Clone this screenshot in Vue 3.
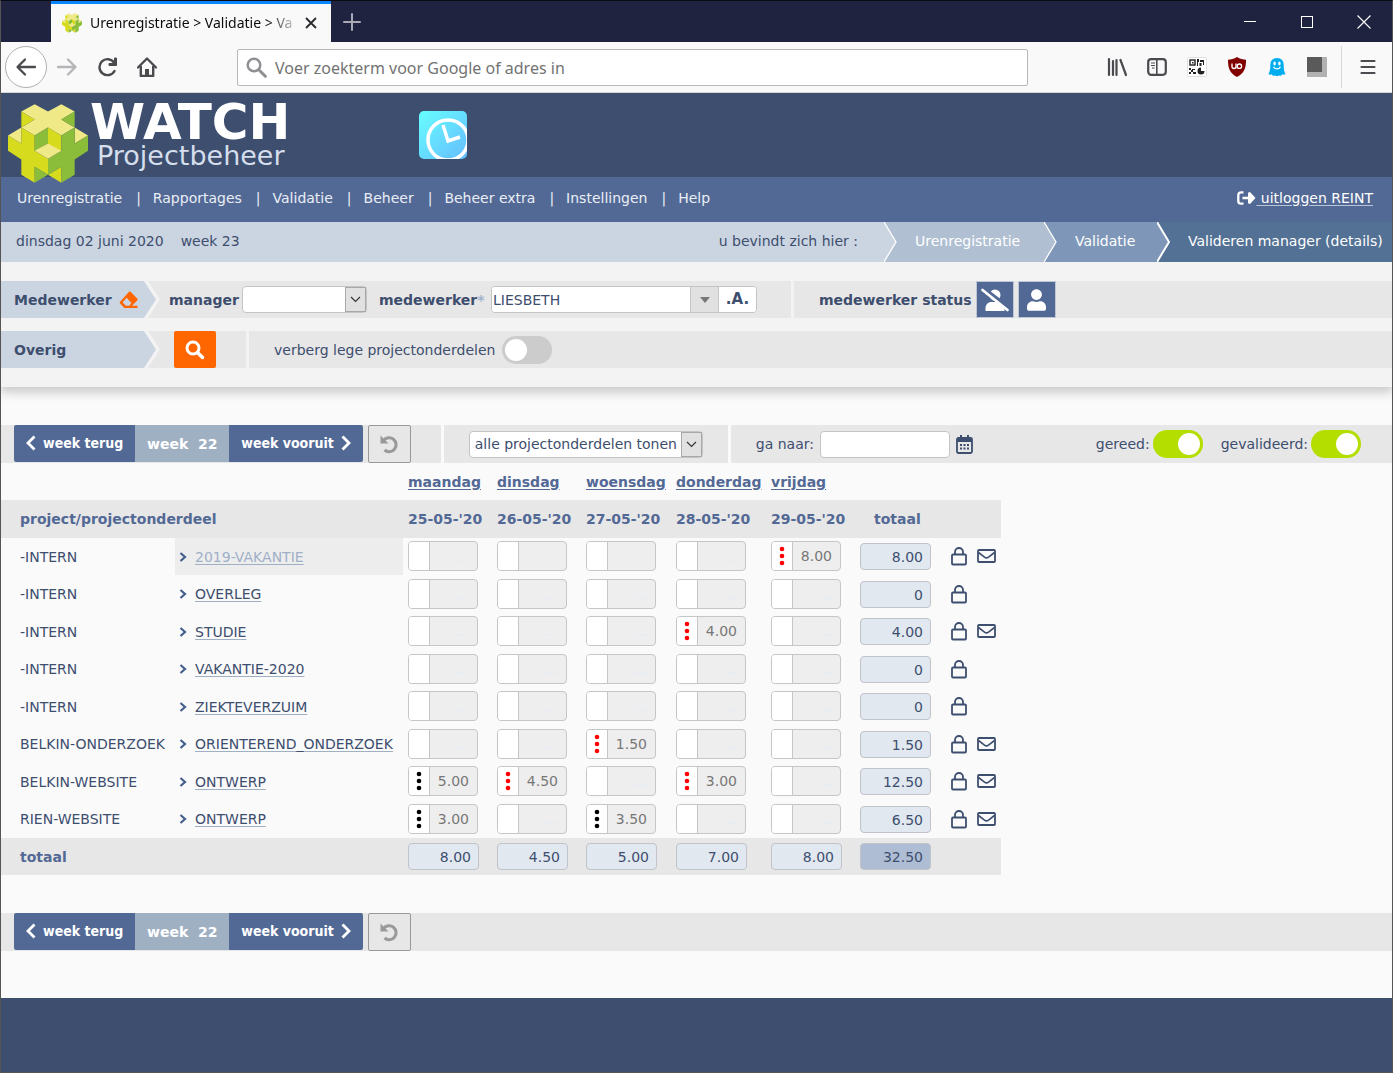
<script setup>
import { ref } from 'vue'

const menu = ['Urenregistratie', 'Rapportages', 'Validatie', 'Beheer', 'Beheer extra', 'Instellingen', 'Help']

const days = [
  { name: 'maandag', date: "25-05-'20", total: '8.00' },
  { name: 'dinsdag', date: "26-05-'20", total: '4.50' },
  { name: 'woensdag', date: "27-05-'20", total: '5.00' },
  { name: 'donderdag', date: "28-05-'20", total: '7.00' },
  { name: 'vrijdag', date: "29-05-'20", total: '8.00' },
]

const none = { value: '', mark: '' }
const red = (value) => ({ value, mark: 'red' })
const black = (value) => ({ value, mark: 'black' })

const rows = [
  { project: '-INTERN', part: '2019-VAKANTIE', cells: [none, none, none, none, red('8.00')], total: '8.00', mail: true, active: true },
  { project: '-INTERN', part: 'OVERLEG', cells: [none, none, none, none, none], total: '0' },
  { project: '-INTERN', part: 'STUDIE', cells: [none, none, none, red('4.00'), none], total: '4.00', mail: true },
  { project: '-INTERN', part: 'VAKANTIE-2020', cells: [none, none, none, none, none], total: '0' },
  { project: '-INTERN', part: 'ZIEKTEVERZUIM', cells: [none, none, none, none, none], total: '0' },
  { project: 'BELKIN-ONDERZOEK', part: 'ORIENTEREND_ONDERZOEK', cells: [none, none, red('1.50'), none, none], total: '1.50', mail: true },
  { project: 'BELKIN-WEBSITE', part: 'ONTWERP', cells: [black('5.00'), red('4.50'), none, red('3.00'), none], total: '12.50', mail: true },
  { project: 'RIEN-WEBSITE', part: 'ONTWERP', cells: [black('3.00'), none, black('3.50'), none, none], total: '6.50', mail: true },
]

const hideEmpty = ref(false)
const ready = ref(true)
const validated = ref(true)
const employee = ref('LIESBETH')
</script>

<template>
  <div class="window">
    <div class="titlebar">
      <div class="tab">
        <svg class="favicon" viewBox="0 0 240 236" aria-hidden="true">
          <use href="#cube" />
        </svg>
        <span class="tab-title">Urenregistratie &gt; Validatie &gt; Va</span>
        <button class="bare tab-close" aria-label="Tabblad sluiten">
          <svg width="12" height="12" viewBox="0 0 12 12"><path d="M1 1l10 10M11 1L1 11" stroke="#2a2a2e" stroke-width="1.8" /></svg>
        </button>
      </div>
      <button class="bare new-tab" aria-label="Nieuw tabblad">
        <svg width="18" height="18" viewBox="0 0 18 18"><path d="M9 1v16M1 9h16" stroke="#a9a9b8" stroke-width="2" stroke-linecap="round" /></svg>
      </button>
      <div class="window-buttons">
        <button class="bare" aria-label="Minimaliseren">
          <svg width="14" height="14" viewBox="0 0 14 14"><path d="M1 6.500h12" stroke="#fff" /></svg>
        </button>
        <button class="bare" aria-label="Maximaliseren">
          <svg width="14" height="14" viewBox="0 0 14 14"><rect x="1.500" y="1.500" width="11" height="11" fill="none" stroke="#fff" /></svg>
        </button>
        <button class="bare" aria-label="Sluiten">
          <svg width="14" height="14" viewBox="0 0 14 14"><path d="M.5.5l13 13M13.500.5l-13 13" stroke="#fff" stroke-width="1.100" /></svg>
        </button>
      </div>
    </div>

    <div class="toolbar">
      <button class="bare back" aria-label="Terug">
        <svg width="22" height="20" viewBox="0 0 22 20"><path d="M20 10H3M10 2.500L2.500 10l7.500 7.500" fill="none" stroke="#4a4a4f" stroke-width="2.300" stroke-linecap="round" stroke-linejoin="round" /></svg>
      </button>
      <button class="bare tool" aria-label="Vooruit">
        <svg width="22" height="20" viewBox="0 0 22 20"><path d="M2 10h17M12 2.500l7.500 7.500-7.500 7.500" fill="none" stroke="#b5b5b7" stroke-width="2.300" stroke-linecap="round" stroke-linejoin="round" /></svg>
      </button>
      <button class="bare tool" aria-label="Vernieuwen">
        <svg width="20" height="20" viewBox="0 0 20 20"><path d="M17.500 14A8 8 0 1 1 17 5.500" fill="none" stroke="#4a4a4f" stroke-width="2.400" stroke-linecap="round" /><path d="M19.500 1v7.500H12V6.500h5.500V1z" fill="#4a4a4f" stroke="#4a4a4f" stroke-linejoin="round" /></svg>
      </button>
      <button class="bare tool" aria-label="Startpagina">
        <svg width="20" height="20" viewBox="0 0 20 20"><path d="M1 10.500L10 1.500l9 9" fill="none" stroke="#4a4a4f" stroke-width="2.300" stroke-linecap="round" stroke-linejoin="round" /><path d="M3.800 9v10h12.400V9" fill="none" stroke="#4a4a4f" stroke-width="2.400" stroke-linejoin="round" /><path d="M8 19v-7h4v7z" fill="#4a4a4f" /></svg>
      </button>
      <div class="urlbar">
        <svg width="21" height="21" viewBox="0 0 21 21" aria-hidden="true"><circle cx="8" cy="8" r="6.300" fill="none" stroke="#8f8f94" stroke-width="2.500" /><path d="M12.800 12.800l6.500 6.500" stroke="#8f8f94" stroke-width="3" stroke-linecap="round" /></svg>
        <input type="text" aria-label="Adresbalk" placeholder="Voer zoekterm voor Google of adres in" />
      </div>
      <div class="extensions">
        <button class="bare" aria-label="Bibliotheek">
          <svg width="20" height="20" viewBox="0 0 20 20"><path d="M2 2v16M6 4v14M9.500 3v15M13.500 3l5.500 15" stroke="#4a4a4f" stroke-width="2.200" stroke-linecap="round" /></svg>
        </button>
        <button class="bare" aria-label="Zijbalk">
          <svg width="20" height="20" viewBox="0 0 20 20"><rect x="1.200" y="2.200" width="17.600" height="15.600" rx="3" fill="none" stroke="#4a4a4f" stroke-width="2.200" /><path d="M9.800 3v14" stroke="#4a4a4f" stroke-width="1.600" /><path d="M4 6h4M4 8.500h4M5 11h2.500" stroke="#4a4a4f" stroke-width="1.200" /></svg>
        </button>
        <button class="bare" aria-label="QR-code">
          <svg width="20" height="20" viewBox="0 0 20 20"><rect x=".5" y=".5" width="19" height="19" rx="1" fill="#fff" stroke="#e0e0e0" /><rect x="3" y="3" width="5" height="5" fill="none" stroke="#222" stroke-width="1.400" /><path d="M5 5h1.500v1.500H5zM10 2h2v3h-1v4h-1zM13 3h4v5h-1V5h-3zM12.500 6h2v3h-2zM2 11h2v2H2zM5 12h3v1H6v2H4v2H2v-2h2v-2h1zM6 15h3v2H6z" fill="#222" /><path d="M14 10.500v3.500h3.500a3.500 3.500 0 1 1-3.500-3.500z" fill="#222" /></svg>
        </button>
        <button class="bare" aria-label="Advertentieblokkering">
          <svg width="20" height="20" viewBox="0 0 20 20"><path d="M10 0c3 2 6 2.600 9 2.700C19 11 17.500 16 10 20 2.500 16 1 11 1 2.700 4 2.600 7 2 10 0z" fill="#800000" /><path d="M5 6.500v3a2 2 0 0 0 4 0v-3M9 9v2.500" fill="none" stroke="#fff" stroke-width="1.300" /><circle cx="12.400" cy="9.200" r="2.200" fill="none" stroke="#fff" stroke-width="1.300" /></svg>
        </button>
        <button class="bare" aria-label="Trackerblokkering">
          <svg width="20" height="20" viewBox="0 0 20 20"><path d="M10 1c4.500 0 6.700 3 6.700 7 0 4 .3 6.500 1.800 9-1.200.9-2.300.9-3.200.3-.9 1.600-2.300 1.900-3.300.9-1 1.200-3 1.200-4 0-1 1-2.400.7-3.300-.9-.9.6-2 .6-3.200-.3C3 14.500 3.300 12 3.300 8c0-4 2.200-7 6.700-7z" fill="#00aef0" /><ellipse cx="7.600" cy="6.500" rx="1.200" ry="1.900" fill="#fff" /><ellipse cx="12.400" cy="6.500" rx="1.200" ry="1.900" fill="#fff" /><path d="M6.500 9.700c1.500 3 5.500 3 7 0" fill="none" stroke="#fff" stroke-width="1.300" /></svg>
        </button>
        <button class="bare" aria-label="Weergave">
          <svg width="20" height="20" viewBox="0 0 20 20"><path d="M0 0h20v20H0z" fill="#b1b1b1" /><path d="M0 0h15v15H0z" fill="#5a5a5a" /></svg>
        </button>
      </div>
      <button class="bare hamburger" aria-label="Menu">
        <svg width="16" height="16" viewBox="0 0 16 16"><path d="M1.500 2h13M1.500 8h13M1.500 14h13" stroke="#4a4a4f" stroke-width="2.200" stroke-linecap="round" /></svg>
      </button>
    </div>

    <header class="brand">
      <svg class="logo" width="80" height="79" viewBox="0 0 240 236" role="img" aria-label="Watch">
        <g id="cube">
          <path fill="#f0e987" d="M80 0l40 22 40-22 40 22-40 24 40 24-40 24-40-24-40 24-40-24 40-24-40-24z" />
          <path fill="#f0e987" d="M0 94l40-24v48zM240 94l-40-24v48z" />
          <path fill="#d6db1d" d="M40 22l40 24-40 24zM40 70l40 24v142l-40-24zM0 94l40 24v48L0 140zM120 70l40 24v50l-40-24zM80 140l40 24v48l-40-24zM120 212l40-24v48z" />
          <path fill="#8bbd3a" d="M200 22l-40 24 40 24zM200 70l-40 24v142l40-24zM240 94l-40 24v48l40-26zM120 70L80 94v48l40-24zM160 140l-40 24v48l40-24zM120 212l-40-24v48z" />
          <path fill="#f0e987" d="M120 118l40 22-40 24-40-24z" />
        </g>
      </svg>
      <div class="brand-text">
        <div class="brand-name">WATCH</div>
        <div class="brand-sub">Projectbeheer</div>
      </div>
      <svg class="clock" width="50" height="50" viewBox="0 0 50 50" role="img" aria-label="Klok">
        <defs>
          <linearGradient id="sky" x1="0" y1="0" x2="1" y2="1">
            <stop offset="0" stop-color="#66ffff" />
            <stop offset="1" stop-color="#66bbff" />
          </linearGradient>
          <clipPath id="tile"><rect x="1" y="1" width="48" height="48" rx="5" /></clipPath>
        </defs>
        <g clip-path="url(#tile)">
          <path d="M0 0h50v50H0z" fill="url(#sky)" />
          <circle cx="30" cy="30" r="20" fill="none" stroke="#fff" stroke-width="3.500" />
          <path d="M25 15l5 16 12-4" fill="none" stroke="#fff" stroke-width="3.500" />
        </g>
      </svg>
    </header>

    <nav class="nav">
      <template v-for="(item, i) in menu" :key="item">
        <span v-if="i" class="bar">|</span>
        <a href="#">{{ item }}</a>
      </template>
      <a class="logout" href="#">
        <svg width="19" height="14" viewBox="0 0 19 14" aria-hidden="true"><path d="M6.500 1.300H4A2.700 2.700 0 0 0 1.300 4v6A2.700 2.700 0 0 0 4 12.700h2.500" fill="none" stroke="#fff" stroke-width="2.300" /><path d="M5.500 5.800H11v-4l2-.8 5.500 6-5.500 6-2-.8v-4H5.500z" fill="#fff" /></svg>
        <span>&nbsp;uitloggen REINT</span>
      </a>
    </nav>

    <div class="crumbs">
      <span class="today">dinsdag 02 juni 2020</span>
      <span>week 23</span>
      <span class="here">u bevindt zich hier :</span>
      <svg class="arrow a1" width="13" height="40" viewBox="0 0 13 40" aria-hidden="true"><path d="M0 0l12 20L0 40z" fill="#cbd5e1" /><path d="M0 0l12 20L0 40" fill="none" stroke="#fff" stroke-width="1.300" /></svg>
      <a class="crumb c1" href="#">Urenregistratie</a>
      <svg class="arrow a2" width="13" height="40" viewBox="0 0 13 40" aria-hidden="true"><path d="M0 0l12 20L0 40z" fill="#b0bfd2" /><path d="M0 0l12 20L0 40" fill="none" stroke="#fff" stroke-width="1.300" /></svg>
      <a class="crumb c2" href="#">Validatie</a>
      <svg class="arrow a3" width="13" height="40" viewBox="0 0 13 40" aria-hidden="true"><path d="M0 0l12 20L0 40z" fill="#7e97b8" /><path d="M0 0l12 20L0 40" fill="none" stroke="#fff" stroke-width="2" /></svg>
      <a class="crumb c3" href="#">Valideren manager (details)</a>
    </div>

    <section class="filters">
      <div class="strip">
        <div class="strip-label">
          Medewerker
          <svg width="20" height="18" viewBox="0 0 20 18" aria-hidden="true"><path d="M11.500.8l6.700 6.600c.7.700.7 1.500 0 2.200L13 14.800h5.500V17H5.500L1.300 12.800c-.8-.8-.8-1.600 0-2.400L10 .8c.5-.5 1-.5 1.500 0zM7.600 6.800L3.600 11.500l3.300 3.300h3.300l2.200-2.700z" fill="#f60" fill-rule="evenodd" /></svg>
        </div>
        <svg class="strip-arrow" width="16" height="37" viewBox="0 0 16 37" aria-hidden="true"><path d="M0 0h4l12 18.500L4 37H0z" fill="#f3f3f3" /><path d="M0 0l12 18.500L0 37z" fill="#cbd5e1" /></svg>
        <div class="part people">
          <label class="strong" for="manager">manager</label>
          <div class="select manager">
            <select id="manager"><option></option></select>
            <span class="select-arrow"><svg width="11" height="7" viewBox="0 0 11 7"><path d="M1 1l4.500 4.500L10 1" fill="none" stroke="#333" stroke-width="1.200" /></svg></span>
          </div>
          <label class="strong employee-label" for="employee">medewerker<span class="star">*</span></label>
          <div class="combo">
            <input id="employee" v-model="employee" type="text" />
            <button class="combo-drop" aria-label="Lijst openen"><svg width="10" height="6" viewBox="0 0 10 6"><path d="M0 0h10L5 6z" fill="#777" /></svg></button>
            <button class="combo-all">.A.</button>
          </div>
        </div>
        <div class="part status">
          <span class="strong">medewerker status</span>
          <button class="square" aria-label="Inactieve medewerkers">
            <svg width="28" height="24" viewBox="0 0 28 24"><circle cx="14" cy="7" r="5.500" fill="#fff" /><path d="M4.500 23v-2.500c0-4 2.500-6.500 6-6.500h7c3.500 0 6 2.500 6 6.500V23z" fill="#fff" /><path d="M2 .5l26 20.500" stroke="#536995" stroke-width="5" /><path d="M1.500 2l25 20" stroke="#fff" stroke-width="2.600" stroke-linecap="round" /></svg>
          </button>
          <button class="square" aria-label="Actieve medewerkers">
            <svg width="19" height="22" viewBox="0 0 448 512"><path fill="#fff" d="M224 256c70.700 0 128-57.300 128-128S294.700 0 224 0 96 57.300 96 128s57.300 128 128 128zm89.600 32h-16.700c-22.200 10.200-46.900 16-72.900 16s-50.600-5.800-72.900-16h-16.700C60.200 288 0 348.200 0 422.400V464c0 26.500 21.500 48 48 48h352c26.500 0 48-21.500 48-48v-41.600c0-74.200-60.200-134.400-134.400-134.400z" /></svg>
          </button>
        </div>
      </div>

      <div class="strip">
        <div class="strip-label">Overig</div>
        <svg class="strip-arrow" width="16" height="37" viewBox="0 0 16 37" aria-hidden="true"><path d="M0 0h4l12 18.500L4 37H0z" fill="#f3f3f3" /><path d="M0 0l12 18.500L0 37z" fill="#cbd5e1" /></svg>
        <div class="part search">
          <button class="search-button" aria-label="Zoeken">
            <svg width="20" height="20" viewBox="0 0 20 20"><circle cx="8" cy="8" r="6" fill="none" stroke="#fff" stroke-width="3" /><path d="M12.500 12.500l5 5" stroke="#fff" stroke-width="3.500" stroke-linecap="round" /></svg>
          </button>
        </div>
        <div class="part hide">
          <label for="hide">verberg lege projectonderdelen</label>
          <input id="hide" v-model="hideEmpty" class="toggle" type="checkbox" />
        </div>
      </div>
    </section>

    <main class="content">
      <div class="weekbar">
        <div class="weeknav">
          <button class="step">
            <svg width="10" height="16" viewBox="0 0 10 16"><path d="M8.500 1.500L2 8l6.500 6.500" fill="none" stroke="#fff" stroke-width="2.800" /></svg>
            week terug
          </button>
          <span class="current">week&nbsp; 22</span>
          <button class="step">
            week vooruit
            <svg width="10" height="16" viewBox="0 0 10 16"><path d="M1.500 1.500L8 8l-6.500 6.500" fill="none" stroke="#fff" stroke-width="2.800" /></svg>
          </button>
        </div>
        <button class="undo" aria-label="Herstellen">
          <svg width="19" height="19" viewBox="0 0 19 19"><path d="M3.500 5.500A7 7 0 1 1 4.500 15" fill="none" stroke="#999" stroke-width="3" /><path d="M.5.5v8h8z" fill="#999" /></svg>
        </button>
        <div class="part choose">
          <div class="select show">
            <select id="show" aria-label="Projectonderdelen"><option>alle projectonderdelen tonen</option></select>
            <span class="select-arrow"><svg width="11" height="7" viewBox="0 0 11 7"><path d="M1 1l4.500 4.500L10 1" fill="none" stroke="#333" stroke-width="1.200" /></svg></span>
          </div>
        </div>
        <div class="part goto">
          <label for="goto">ga naar:</label>
          <input id="goto" class="date" type="text" />
          <button class="bare" aria-label="Kalender">
            <svg width="17" height="19" viewBox="0 0 17 19"><rect x="1" y="3" width="15" height="15" rx="1.500" fill="none" stroke="#3d4e6e" stroke-width="1.800" /><path d="M1 3h15v4H1zM4 0h2v4H4zM11 0h2v4h-2z" fill="#3d4e6e" /><path d="M4 9h2v2H4zM7.500 9h2v2h-2zM11 9h2v2h-2zM4 12.500h2v2H4zM7.500 12.500h2v2h-2zM11 12.500h2v2h-2z" fill="#3d4e6e" /></svg>
          </button>
        </div>
        <div class="switches">
          <label for="ready">gereed:</label>
          <input id="ready" v-model="ready" class="toggle" type="checkbox" />
          <label class="second" for="validated">gevalideerd:</label>
          <input id="validated" v-model="validated" class="toggle" type="checkbox" />
        </div>
      </div>

      <table class="hours">
        <colgroup>
          <col class="w-project" /><col class="w-part" /><col class="w-day" /><col class="w-day" /><col class="w-mid" /><col class="w-wide" /><col class="w-day" /><col class="w-total" /><col class="w-icons" />
        </colgroup>
        <thead>
          <tr class="names">
            <td colspan="2"></td>
            <th v-for="day in days" :key="day.name" scope="col"><a href="#">{{ day.name }}</a></th>
            <td colspan="2"></td>
          </tr>
          <tr class="dates">
            <th class="first" colspan="2" scope="col">project/projectonderdeel</th>
            <th v-for="day in days" :key="day.date" scope="col">{{ day.date }}</th>
            <th class="total-head" scope="col">totaal</th>
            <td></td>
          </tr>
        </thead>
        <tbody>
          <tr v-for="(row, r) in rows" :key="r">
            <td class="first">{{ row.project }}</td>
            <td class="piece" :class="{ active: row.active }">
              <div class="piece-in">
                <svg width="8" height="10" viewBox="0 0 8 10" aria-hidden="true"><path d="M1.500 1L6 5 1.500 9" fill="none" stroke="#455f8c" stroke-width="2.200" /></svg>
                <a href="#">{{ row.part }}</a>
              </div>
            </td>
            <td v-for="(cell, c) in row.cells" :key="c">
              <div class="entry">
                <button class="mark" :class="cell.mark" :aria-label="'Opmerking ' + days[c].name">
                  <svg v-if="cell.mark" width="6" height="20" viewBox="0 0 6 20"><circle cx="3" cy="3" r="2.300" /><circle cx="3" cy="10" r="2.300" /><circle cx="3" cy="17" r="2.300" /></svg>
                </button>
                <input type="text" :value="cell.value" placeholder="..." :aria-label="row.part + ' ' + days[c].name" disabled />
              </div>
            </td>
            <td><output class="sum">{{ row.total }}</output></td>
            <td>
              <div class="icons">
                <button class="bare" aria-label="Vergrendelen">
                  <svg width="18" height="20" viewBox="0 0 18 20"><rect x="2" y="8.500" width="14" height="10" rx="1" fill="none" stroke="#3d4e6e" stroke-width="1.800" /><path d="M5 8.500V6a4 4 0 0 1 8 0v2.500" fill="none" stroke="#3d4e6e" stroke-width="1.800" /></svg>
                </button>
                <button v-if="row.mail" class="bare" aria-label="Bericht">
                  <svg width="19" height="14" viewBox="0 0 19 14"><rect x="1" y="1" width="17" height="12" rx="1" fill="none" stroke="#3d4e6e" stroke-width="1.800" /><path d="M1.500 3.500l6 4.600c1.300 1 2.700 1 4 0l6-4.600" fill="none" stroke="#3d4e6e" stroke-width="1.600" /></svg>
                </button>
              </div>
            </td>
          </tr>
        </tbody>
        <tfoot>
          <tr>
            <th class="first" colspan="2" scope="row">totaal</th>
            <td v-for="day in days" :key="day.name"><output class="sum">{{ day.total }}</output></td>
            <td><output class="sum grand">32.50</output></td>
            <td></td>
          </tr>
        </tfoot>
      </table>

      <div class="weekbar">
        <div class="weeknav">
          <button class="step">
            <svg width="10" height="16" viewBox="0 0 10 16"><path d="M8.500 1.500L2 8l6.500 6.500" fill="none" stroke="#fff" stroke-width="2.800" /></svg>
            week terug
          </button>
          <span class="current">week&nbsp; 22</span>
          <button class="step">
            week vooruit
            <svg width="10" height="16" viewBox="0 0 10 16"><path d="M1.500 1.500L8 8l-6.500 6.500" fill="none" stroke="#fff" stroke-width="2.800" /></svg>
          </button>
        </div>
        <button class="undo" aria-label="Herstellen">
          <svg width="19" height="19" viewBox="0 0 19 19"><path d="M3.500 5.500A7 7 0 1 1 4.500 15" fill="none" stroke="#999" stroke-width="3" /><path d="M.5.5v8h8z" fill="#999" /></svg>
        </button>
      </div>
    </main>

    <footer class="footer"></footer>
  </div>
</template>

<style>
body {
  margin: 0;
}
</style>

<style scoped>
.window {
  display: flex;
  flex-direction: column;
  box-sizing: border-box;
  min-height: 100vh;
  border: 1px solid #555;
  border-top-color: #0a0a14;
  background: #fafafa;
  color: #3d4e6e;
  font: 14px/20px "DejaVu Sans", sans-serif;
}
.window *,
.window *::before {
  box-sizing: border-box;
}
svg {
  display: block;
  flex: none;
}
button,
input,
select {
  margin: 0;
  padding: 0;
  font: inherit;
  color: inherit;
}
a {
  color: inherit;
}
.bare {
  display: flex;
  align-items: center;
  justify-content: center;
  border: 0;
  background: none;
}
.strong {
  font-weight: bold;
}

/* browser chrome */
.titlebar {
  display: flex;
  height: 41px;
  padding-left: 50px;
  background: #202340;
}
.tab {
  display: flex;
  align-items: center;
  width: 280px;
  padding: 0 14px 0 11px;
  border-top: 3px solid #0a84ff;
  background: #f9f9fa;
  color: #0c0c0d;
  font: 14px/20px "Noto Sans", sans-serif;
}
.favicon {
  width: 20px;
  height: 20px;
}
.tab-title {
  flex: 1;
  margin: 0 4px 0 8px;
  white-space: nowrap;
  mask-image: linear-gradient(to right, #000 84%, transparent);
}
.new-tab {
  width: 42px;
}
.window-buttons {
  display: flex;
  gap: 43px;
  margin-left: auto;
  padding-right: 21px;
}
.toolbar {
  display: flex;
  align-items: center;
  height: 51px;
  padding: 0 16px 0 4px;
  border-bottom: 1px solid #d8d8d8;
  background: #f9f9fa;
}
.back {
  width: 42px;
  height: 42px;
  border: 1px solid #b0b0b0;
  border-radius: 50%;
  background: #fff;
}
.tool {
  width: 40px;
  height: 40px;
}
.urlbar {
  display: flex;
  align-items: center;
  gap: 8px;
  flex: 1;
  max-width: 791px;
  height: 37px;
  margin-left: 70px;
  padding: 0 8px;
  border: 1px solid #b8b8b8;
  border-radius: 2px;
  background: #fff;
}
.urlbar input {
  flex: 1;
  padding-top: 2px;
  border: 0;
  background: none;
  font: 16px/24px "Noto Sans", sans-serif;
}
.urlbar input::placeholder {
  color: #737373;
}
.extensions {
  display: flex;
  gap: 20px;
  margin-left: auto;
  padding-right: 14px;
}
.hamburger {
  height: 42px;
  padding-left: 18px;
  border-left: 1px solid #d8d8da;
}

/* header */
.brand {
  display: flex;
  height: 84px;
  padding-left: 7px;
  background: #3d4e6e;
  color: #fff;
}
.logo {
  position: relative;
  margin-top: 11px;
}
.brand-text {
  width: 202px;
  margin-top: 10px;
}
.brand-name {
  margin-left: 2px;
  font-size: 50px;
  font-weight: bold;
  line-height: 38px;
}
.brand-sub {
  margin-left: 9px;
  color: #d5deec;
  font-size: 27px;
  line-height: 30px;
}
.clock {
  margin: 17px 0 0 128px;
}
.nav {
  display: flex;
  align-items: center;
  height: 45px;
  padding: 0 19px 4px 16px;
  background: #536995;
  color: #e9eef6;
}
.nav a {
  text-decoration: none;
}
.bar {
  margin: 0 12px 0 14px;
}
.nav .logout {
  display: flex;
  align-items: center;
  margin-left: auto;
  color: #fff;
}
.logout span {
  text-decoration: underline;
  text-decoration-color: #b8c4da;
  text-underline-offset: 2px;
}
.crumbs {
  display: flex;
  align-items: center;
  height: 40px;
  padding-left: 15px;
  background: #cbd5e1;
}
.today {
  margin-right: 17px;
}
.here {
  margin: 0 26px 0 auto;
}
.crumb {
  display: flex;
  align-items: center;
  height: 40px;
  padding-bottom: 2px;
  color: #fff;
  text-decoration: none;
}
.crumbs > span {
  padding-bottom: 2px;
}
.c1 {
  width: 147px;
  padding-left: 18px;
  background: #b0bfd2;
}
.c2 {
  width: 100px;
  padding-left: 18px;
  background: #7e97b8;
}
.c3 {
  width: 222px;
  padding-left: 18px;
  background: #537195;
}
.a1 {
  background: #b0bfd2;
}
.a2 {
  background: #7e97b8;
}
.a3 {
  background: #537195;
}

/* filters */
.filters {
  display: flex;
  flex-direction: column;
  gap: 13px;
  padding: 19px 0;
  background: #f3f3f3;
  box-shadow: 0 4px 10px 1px #c8c8c8;
  clip-path: inset(0 0 -20px 0);
}
.strip {
  display: flex;
  height: 37px;
  background: #e7e7e7;
}
.strip-label {
  display: flex;
  align-items: center;
  gap: 7px;
  width: 143px;
  padding-left: 13px;
  background: #cbd5e1;
  font-weight: bold;
}
.part {
  display: flex;
  align-items: center;
}
.people {
  width: 634px;
  padding-left: 9px;
  border-right: 3px solid #f3f3f3;
}
.select {
  position: relative;
  height: 27px;
}
.select select {
  width: 100%;
  height: 100%;
  padding-left: 5px;
  border: 1px solid #c4c4c4;
  border-radius: 4px;
  background: #fff;
  appearance: none;
}
.select-arrow {
  position: absolute;
  top: 1px;
  right: 1px;
  bottom: 1px;
  display: flex;
  align-items: center;
  justify-content: center;
  width: 21px;
  border: 1px solid #a8a8a8;
  background: #e1e1e1;
  pointer-events: none;
}
.manager {
  width: 125px;
  margin: 0 12px 0 auto;
}
.employee-label {
  width: 112px;
  white-space: nowrap;
}
.star {
  color: #9fb3cc;
}
.combo {
  display: flex;
  width: 266px;
  height: 27px;
  margin-right: 34px;
  border: 1px solid #c4c4c4;
  border-radius: 4px;
  background: #fff;
  overflow: hidden;
}
.combo input {
  flex: 1;
  min-width: 0;
  padding-left: 1px;
  border: 0;
}
.combo-drop {
  display: flex;
  align-items: center;
  justify-content: center;
  width: 29px;
  border: solid #c4c4c4;
  border-width: 0 1px;
  background: #e1e1e1;
}
.combo-all {
  width: 37px;
  padding-bottom: 2px;
  border: 0;
  background: #fff;
  font-size: 15px;
  font-weight: bold;
}
.status {
  gap: 4px;
  padding-left: 25px;
}
.square {
  display: flex;
  align-items: center;
  justify-content: center;
  width: 38px;
  height: 37px;
  border: 1px solid #bfc6d4;
  background: #536995;
}
.search {
  width: 89px;
  padding-left: 14px;
  border-right: 3px solid #f3f3f3;
}
.search-button {
  display: flex;
  align-items: center;
  justify-content: center;
  width: 42px;
  height: 37px;
  border: 0;
  border-radius: 2px;
  background: #f60;
}
.hide {
  gap: 7px;
  padding-left: 25px;
}
.toggle {
  width: 50px;
  height: 28px;
  padding: 3px;
  border-radius: 14px;
  background: #ccc;
  appearance: none;
}
.toggle::before {
  display: block;
  width: 22px;
  height: 22px;
  border-radius: 50%;
  background: #fff;
  content: "";
}
.toggle:checked {
  background: #b3de00;
}
.toggle:checked::before {
  margin-left: auto;
}

/* week bar */
.content {
  padding: 38px 0 47px;
}
.weekbar {
  display: flex;
  height: 38px;
  padding-left: 13px;
  background: #e7e7e7;
}
.weeknav {
  display: flex;
  height: 37px;
  margin-right: 5px;
  border-radius: 2px;
  overflow: hidden;
  color: #fff;
  font-weight: bold;
}
.step {
  display: flex;
  align-items: center;
  gap: 7px;
  padding: 0 12px 2px;
  border: 0;
  background: #536995;
  font-family: "DejaVu Sans Condensed", "DejaVu Sans", sans-serif;
  font-stretch: condensed;
}
.current {
  display: flex;
  align-items: center;
  justify-content: center;
  width: 94px;
  background: #9fb0c3;
}
.undo {
  display: flex;
  align-items: center;
  justify-content: center;
  width: 43px;
  border: 1px solid #999;
  border-radius: 2px;
  background: #e7e7e7;
}
.choose {
  margin-left: 30px;
  padding: 0 25px;
  border: solid #fafafa;
  border-width: 0 3px;
}
.show {
  width: 234px;
}
.goto {
  gap: 6px;
  padding-left: 25px;
}
.date {
  width: 130px;
  height: 27px;
  border: 1px solid #c4c4c4;
  border-radius: 4px;
  background: #fff;
}
.switches {
  display: flex;
  align-items: center;
  gap: 3px;
  margin-left: auto;
  padding-right: 31px;
}
.second {
  margin-left: 15px;
}

/* hours */
.hours {
  width: 1000px;
  margin-bottom: 38px;
  border-spacing: 0;
  table-layout: fixed;
}
.w-project { width: 174px; }
.w-part { width: 228px; }
.w-day { width: 89px; }
.w-mid { width: 90px; }
.w-wide { width: 95px; }
.w-total { width: 90px; }
.w-icons { width: 56px; }
.hours th,
.hours td {
  padding: 0 0 0 5px;
  text-align: left;
  white-space: nowrap;
}
.hours th {
  color: #536995;
}
.hours .first {
  padding-left: 19px;
}
.names {
  height: 37px;
}
.names a {
  text-underline-offset: 2px;
}
.dates {
  height: 38px;
  background: #e7e7e7;
}
.hours .total-head {
  padding-left: 19px;
}
.hours tbody tr {
  height: 38px;
}
.hours tbody tr:nth-child(odd) {
  height: 37px;
}
.hours tbody tr:nth-child(odd) td:nth-child(n + 3) {
  padding-bottom: 1px;
}
.hours tfoot tr {
  height: 37px;
  background: #e7e7e7;
}
.piece-in {
  display: flex;
  align-items: center;
  gap: 8px;
}
.hours .piece {
  padding-left: 4px;
}
.active {
  background: #ededed;
}
.piece a {
  text-decoration-color: #9fb0c3;
  text-underline-offset: 2px;
}
.active a {
  color: #9fb0c8;
}
.entry {
  display: flex;
  width: 70px;
  height: 30px;
  border: 1px solid #c6c6c6;
  border-radius: 4px;
  background: #eee;
  overflow: hidden;
}
.mark {
  display: flex;
  align-items: center;
  justify-content: center;
  flex: none;
  width: 21px;
  border: 0;
  border-right: 1px solid #c6c6c6;
  background: #fff;
}
.red {
  fill: #f00;
}
.black {
  fill: #000;
}
.entry input {
  flex: 1;
  min-width: 0;
  padding-right: 8px;
  border: 0;
  background: none;
  color: #777;
  text-align: right;
}
.entry input::placeholder {
  color: #e1ebf7;
}
.sum {
  display: block;
  width: 71px;
  height: 27px;
  padding-right: 7px;
  border: 1px solid #c0c4ca;
  border-radius: 4px;
  background: #e2e8f0;
  line-height: 26px;
  text-align: right;
}
.grand {
  background: #aebdd4;
}
.icons {
  display: flex;
  align-items: center;
  gap: 9px;
}
.footer {
  flex: 1;
  min-height: 74px;
  background: #3d4e6e;
}
</style>
